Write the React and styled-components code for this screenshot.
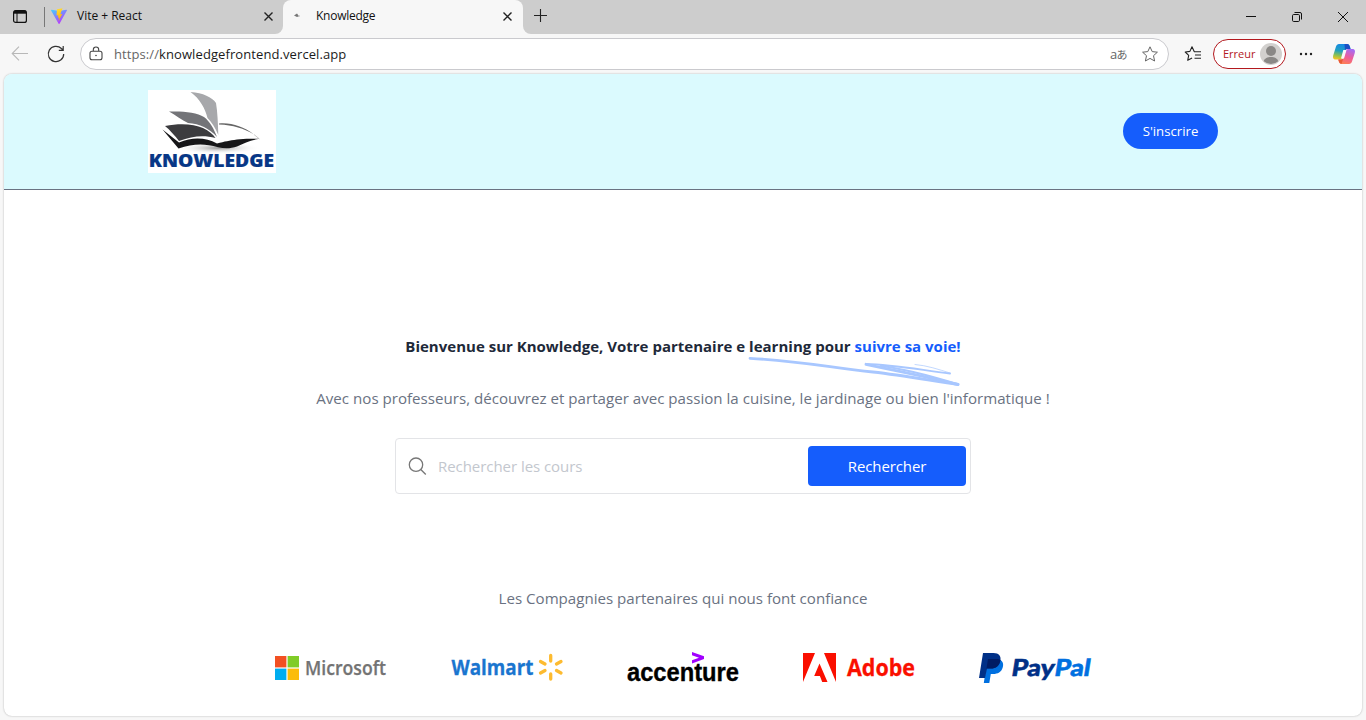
import React from "react";
import styled, { createGlobalStyle } from "styled-components";

const GlobalStyle = createGlobalStyle`
  * { box-sizing: border-box; }
  body {
    margin: 0;
    background: #f7f7f7;
    font-family: "Open Sans", "Noto Sans", sans-serif;
    overflow: hidden;
  }
  svg { display: block; flex: none; overflow: visible; }
`;

const Window = styled.div`
  width: 1366px;
  height: 720px;
  display: flex;
  flex-direction: column;
  background: #f7f7f7;
`;

const TabStrip = styled.div`
  height: 34px;
  display: flex;
  background: #f7f7f7;
`;

const LeftStrip = styled.div`
  width: 283px;
  display: flex;
  align-items: center;
  padding: 0 10px 2px 13px;
  background: #cdcdcd;
  border-bottom-right-radius: 8px;
`;

const Divider = styled.span`
  width: 1px;
  height: 20px;
  margin: 2px 6px 0 17px;
  background: #777;
`;

const ActiveTabSlot = styled.div`
  width: 240px;
  background: #cdcdcd;
`;

const ActiveTab = styled.div`
  height: 34px;
  display: flex;
  align-items: center;
  padding: 0 11px 2px 10px;
  background: #f7f7f7;
  border-radius: 8px 8px 0 0;
`;

const TabTitle = styled.span`
  flex: 1;
  margin-left: ${(p) => p.$gap}px;
  font-size: 12px;
  line-height: 16px;
  letter-spacing: ${(p) => p.$track || 0}px;
  color: #111;
`;

const RightStrip = styled.div`
  flex: 1;
  display: flex;
  align-items: center;
  padding: 0 17px 2px 10px;
  background: #cdcdcd;
  border-bottom-left-radius: 8px;
`;

const WindowButtons = styled.div`
  margin: 2px 0 0 auto;
  display: flex;
  align-items: center;
  gap: 34px;
`;

const Toolbar = styled.div`
  height: 40px;
  display: flex;
  align-items: center;
  padding: 0 10px 0 11px;
`;

const AddressBar = styled.div`
  width: 1089px;
  height: 32px;
  margin-left: 15px;
  padding: 0 10px 0 8px;
  display: flex;
  align-items: center;
  background: #fff;
  border: 1px solid #cacace;
  border-radius: 16px;
`;

const Url = styled.span`
  flex: 1;
  margin-left: 11px;
  font-size: 13px;
  letter-spacing: 0.09px;
  color: #1b1b1b;
  span { color: #666; }
`;

const Translate = styled.span`
  margin-right: 15px;
  color: #666;
  font-family: "Open Sans", "Noto Sans CJK JP", sans-serif;
  font-size: 13px;
  line-height: 16px;
  letter-spacing: -0.6px;
  small { font-size: 11px; }
`;

const Profile = styled.div`
  width: 73px;
  height: 30px;
  margin: 0 13px 0 12px;
  padding: 0 3px 1px 9px;
  display: flex;
  align-items: center;
  justify-content: space-between;
  border: 1px solid #b3181e;
  border-radius: 15px;
  background: #fff;
  color: #b3181e;
  font-size: 11px;
`;

const Page = styled.main`
  height: 642px;
  margin: 0 4px;
  display: flex;
  flex-direction: column;
  background: #fff;
  border-radius: 8px;
  overflow: hidden;
  box-shadow: 0 0 2px rgba(0, 0, 0, 0.3);
`;

const Header = styled.header`
  height: 116px;
  flex: none;
  display: flex;
  align-items: flex-start;
  justify-content: space-between;
  padding: 16px 144px;
  background: #dbfafe;
  border-bottom: 1px solid #6a7282;
`;

const SignUp = styled.button`
  width: 95px;
  height: 36px;
  margin-top: 23px;
  padding: 0;
  border: 0;
  border-radius: 18px;
  background: #155dfc;
  color: #fff;
  font: 400 13.2px "Open Sans", sans-serif;
`;

const Hero = styled.section`
  display: flex;
  flex-direction: column;
  align-items: center;
  padding-top: 144px;
`;

const Title = styled.h1`
  margin: 0;
  position: relative;
  font-size: 15px;
  line-height: 24px;
  font-weight: 700;
  letter-spacing: 0.01px;
  white-space: nowrap;
  color: #1e2939;
  em { font-style: normal; color: #155dfc; }
`;

const Underline = styled.svg`
  position: absolute;
  right: -1px;
  bottom: -29px;
`;

const Paragraph = styled.p`
  margin: ${(p) => p.$top}px 0 0;
  font-size: 15.1px;
  line-height: 24px;
  letter-spacing: ${(p) => p.$track || 0}px;
  white-space: nowrap;
  color: #6a7282;
`;

const Search = styled.form`
  width: 576px;
  height: 56px;
  margin-top: 28px;
  padding: 0 4px 0 11px;
  display: flex;
  align-items: center;
  border: 1px solid #e3e4e7;
  border-radius: 4px;
`;

const Placeholder = styled.span`
  flex: 1;
  margin-left: 11px;
  font-size: 15px;
  letter-spacing: -0.05px;
  color: #c3c7ce;
`;

const SearchButton = styled.button`
  width: 158px;
  height: 40px;
  padding: 0;
  border: 0;
  border-radius: 4px;
  background: #155dfc;
  color: #fff;
  font: 400 15px "Open Sans", sans-serif;
  letter-spacing: -0.1px;
`;

const Partners = styled.div`
  display: flex;
  align-items: center;
  gap: 64px;
  margin-top: 42px;
`;

const Close = () => (
  <svg width="10" height="10" viewBox="0 0 10 10" stroke="#222" strokeWidth="1.4">
    <path d="M1.500 1.500l8 8M9.500 1.500l-8 8" />
  </svg>
);

const STAR = "M8 .8l2.2 4.8 5.2.6-3.9 3.5 1.1 5.3L8 12.4 3.4 15l1.1-5.3L.6 6.2l5.2-.6z";

const BookLogo = () => (
  <svg width="128" height="83" viewBox="0 0 128 83">
    <defs>
      <radialGradient id="shade">
        <stop offset="0" stopColor="#777" stopOpacity=".75" />
        <stop offset="1" stopColor="#fff" stopOpacity="0" />
      </radialGradient>
    </defs>
    <rect width="128" height="83" fill="#fff" />
    <ellipse cx="70" cy="58" rx="42" ry="6" fill="url(#shade)" />
    <path d="M42.500 2C55 3 64 7 68 13c1.500 9 2 20 2.300 32-3-7-6-12-10.800-17C57 18 52 9 42.500 2z" fill="#a7a8ab" />
    <path d="M21 21.500C34 21 49 22 56 27c6 4.500 10 12 13 20-8-9-17-13-29-14C34 30 27 25 21 21.500z" fill="#737478" />
    <path d="M17 36c15-3 29-2 38 2 6 3 10 6 12.500 10-12-3-23-2-36.500 3-4-5-9-11-14-15z" fill="#3c3c3f" />
    <path d="M14.500 39.500l16.500 13c14-6 27-5 38 1 8-2 12-3 20-4 6-1 13-1 22.500-.7C103 50 96 53 89 56.500c-6 2-12 2.500-19 .7-14-4-25-3.500-39.500 1.300z" fill="#161618" />
    <path d="M71 33.500c13-1 24 3 35 11-10-6-21-9.500-35-10z" fill="#666" />
    <path d="M106 44.500l5.500 4.500" stroke="#999" strokeWidth=".5" />
    <text x="0.700" y="77.200" fontFamily="Open Sans" fontWeight="800" fontSize="18" textLength="125.300" lengthAdjust="spacingAndGlyphs" fill="#073786" stroke="#073786" strokeWidth=".2">KNOWLEDGE</text>
  </svg>
);

const Microsoft = () => (
  <svg width="112" height="32" viewBox="0 0 112 32">
    <path fill="#f25022" d="M0 4h11.4v11.4H0z" />
    <path fill="#80cc28" d="M12.6 4H24v11.4H12.6z" />
    <path fill="#00adef" d="M0 16.6h11.4V28H0z" />
    <path fill="#fbbc09" d="M12.6 16.6H24V28H12.6z" />
    <text x="30" y="23" fontFamily="Open Sans" fontWeight="600" fontSize="19.5" textLength="81" lengthAdjust="spacingAndGlyphs" fill="#737373" stroke="#737373" strokeWidth=".25">Microsoft</text>
  </svg>
);

const Walmart = () => (
  <svg width="112" height="32" viewBox="0 0 112 32">
    <text x="0.500" y="23" fontFamily="Open Sans" fontWeight="700" fontSize="22" textLength="82" lengthAdjust="spacingAndGlyphs" fill="#1a75cf" stroke="#1a75cf" strokeWidth=".3">Walmart</text>
    <g stroke="#fdbb30" strokeWidth="3.3" strokeLinecap="round">
      <path d="M99.700 3.500V9M99.700 22v5M89.500 9.500l4.500 2.500M110 9.500l-4.500 2.500M89.500 21l4.500-2.500M110 21l-4.500-2.500" />
    </g>
  </svg>
);

const Accenture = () => (
  <svg width="112" height="32" viewBox="0 0 112 32">
    <path d="M65 0l12 4.300v2.800L65 11.500V8.200l7-2.500-7-2.400z" fill="#a100ff" />
    <text x="0" y="29" fontFamily="Liberation Sans" fontWeight="700" fontSize="25.500" textLength="112" lengthAdjust="spacingAndGlyphs" fill="#000" stroke="#000" strokeWidth=".35">accenture</text>
  </svg>
);

const Adobe = () => (
  <svg width="112" height="32" viewBox="0 0 112 32">
    <path d="M0 1h12L0 30zM21 1h12v29zM16.500 11.500L24.500 30h-5.300l-2.300-6h-5.700z" fill="#fa0f00" />
    <text x="44" y="23.500" fontFamily="Open Sans" fontWeight="700" fontSize="23" textLength="68" lengthAdjust="spacingAndGlyphs" fill="#fa0f00" stroke="#fa0f00" strokeWidth=".3">Adobe</text>
  </svg>
);

const PayPal = () => (
  <svg width="112" height="32" viewBox="0 0 112 32">
    <path d="M8.500 7H19c4.700 1 6 5 4.700 8.500-1.200 4.500-5 6.500-9.500 6.500h-2.400L10.300 31H4.800z" fill="#0070e0" />
    <path d="M4 1h10.500C20 1 22.500 4.500 21.300 9c-1.200 5.500-5 7.500-9.500 7.500H8L6 26H0z" fill="#003087" />
    <path d="M9 7h9.500c1.200 0 2.200.300 2.900 1-.8 6-4.400 8.500-9.600 8.500H7.500z" fill="#001c64" />
    <g transform="translate(31.500 24) skewX(-9)" fontFamily="Lato" fontWeight="900" fontSize="23.500" strokeWidth=".5">
      <text x="0" y="0" textLength="43" lengthAdjust="spacingAndGlyphs" fill="#003087" stroke="#003087">Pay</text>
      <text x="43" y="0" textLength="36" lengthAdjust="spacingAndGlyphs" fill="#0070e0" stroke="#0070e0">Pal</text>
    </g>
  </svg>
);

const Browser = () => (
  <>
    <TabStrip>
      <LeftStrip>
        <svg width="14" height="13" viewBox="0 0 14 13" fill="none" stroke="#111">
          <rect x=".6" y=".6" width="12.8" height="11.8" rx="2" strokeWidth="1.2" />
          <path d="M1 2.2h12" strokeWidth="3" />
          <path d="M4 3v9" />
        </svg>
        <Divider />
        <svg width="16" height="16" viewBox="0 0 32 32">
          <defs>
            <linearGradient id="vite" x1="0" y1="0" x2=".6" y2="1"><stop stopColor="#41d1ff" /><stop offset="1" stopColor="#bd34fe" /></linearGradient>
            <linearGradient id="bolt" x1=".4" y1="0" x2=".6" y2="1"><stop stopColor="#ffdd35" /><stop offset="1" stopColor="#ffa800" /></linearGradient>
          </defs>
          <path d="M31.8 5L17 31.3a1 1 0 01-1.8 0L.2 5a1 1 0 011-1.5L16 6l14.7-2.5A1 1 0 0131.8 5z" fill="url(#vite)" />
          <path d="M23 .5L12 2.6l-1 12.3 3.7-.6-1 5.2 2.8-.5-2 8 8-15-4 .7L23 .5z" fill="url(#bolt)" />
        </svg>
        <TabTitle $gap={10} $track={-0.02}>Vite + React</TabTitle>
        <Close />
      </LeftStrip>
      <ActiveTabSlot>
        <ActiveTab>
          <svg width="8" height="6" viewBox="0 0 8 6"><path d="M1 2.500l3-2 2 2.700-2 .8z" fill="#777" /><path d="M5 3h2" stroke="#bbb" /></svg>
          <TabTitle $gap={15} $track={-0.25}>Knowledge</TabTitle>
          <Close />
        </ActiveTab>
      </ActiveTabSlot>
      <RightStrip>
        <svg width="14" height="14" viewBox="0 0 14 14" stroke="#222" strokeWidth="1.1"><path d="M7.500 0v13M1 6.500h13" /></svg>
        <WindowButtons>
          <svg width="12" height="12" viewBox="0 0 12 12" stroke="#111"><path d="M1 5.500h10" /></svg>
          <svg width="12" height="12" viewBox="0 0 12 12" fill="none" stroke="#111"><rect x="1.500" y="3.500" width="7" height="7" rx="1.200" /><path d="M3.500 1.500H9a1.500 1.500 0 011.500 1.500v5.500" /></svg>
          <svg width="12" height="12" viewBox="0 0 12 12" stroke="#111"><path d="M1 1l10 10M11 1L1 11" /></svg>
        </WindowButtons>
      </RightStrip>
    </TabStrip>
    <Toolbar>
      <svg width="18" height="16" viewBox="0 0 18 16" fill="none" stroke="#b8b8b8" strokeWidth="1.1"><path d="M17 7.500H1.500M8 .7L1.200 7.500 8 14.300" /></svg>
      <svg width="18" height="18" viewBox="0 0 18 18" fill="none" stroke="#333" strokeWidth="1.2" style={{ marginLeft: 18 }}><path d="M16.700 9A7.700 7.700 0 1114.400 3.500L16 5M16.200 1v4.400h-4.400" /></svg>
      <AddressBar>
        <svg width="14" height="14" viewBox="0 0 14 14" fill="none" stroke="#444" strokeWidth="1.1"><rect x="1" y="4.200" width="12" height="8.600" rx="2" /><path d="M4.300 4V2.700a2.700 2.700 0 015.400 0V4" /><circle cx="7" cy="8.500" r=".8" fill="#444" stroke="none" /></svg>
        <Url><span>https://</span>knowledgefrontend.vercel.app</Url>
        <Translate>a<small>あ</small></Translate>
        <svg width="16" height="16" viewBox="0 0 16 16" fill="none" stroke="#666" strokeLinejoin="round"><path d={STAR} /></svg>
      </AddressBar>
      <svg width="17" height="16" viewBox="0 0 17 16" fill="none" stroke="#222" strokeWidth="1.1" strokeLinejoin="round" style={{ marginLeft: 15 }}>
        <path d="M10.300 5.700L8 .7 5.900 5.400 1.200 6l3.500 3.300-1 5 4.400-2.400M10 5.700h7M11 9h6M10.500 12.300H17" />
      </svg>
      <Profile>
        Erreur
        <svg width="22" height="22" viewBox="0 0 22 22"><circle cx="11" cy="11" r="11" fill="#d2d0ce" /><circle cx="11" cy="8" r="5" fill="#8a8886" /><path d="M3.800 18.300c1-5.600 13.400-5.600 14.400 0a11 11 0 01-14.400 0z" fill="#8a8886" /></svg>
      </Profile>
      <svg width="14" height="4" viewBox="0 0 14 4" fill="#222"><circle cx="2" cy="2" r="1.200" /><circle cx="7" cy="2" r="1.200" /><circle cx="12" cy="2" r="1.200" /></svg>
      <svg width="22" height="20" viewBox="0 0 22 20" style={{ marginLeft: 20 }}>
        <defs>
          <linearGradient id="coolSide" x1=".5" y1="0" x2=".3" y2="1"><stop stopColor="#1689e5" /><stop offset=".45" stopColor="#20a0c0" /><stop offset=".75" stopColor="#8bc052" /><stop offset="1" stopColor="#f5c421" /></linearGradient>
          <linearGradient id="warmSide" x1=".7" y1="0" x2=".3" y2="1"><stop stopColor="#a56bf5" /><stop offset=".5" stopColor="#ed5c9c" /><stop offset="1" stopColor="#ff8050" /></linearGradient>
        </defs>
        <path d="M6 0h8c2 0 2.600 1.500 3 3l.5 2h-3c-2 0-2.500 1-3 2.500L10 13c-.6 2-1.400 2.500-3 2.500H3c-3 0-3.500-2-2.500-5L3 2.500C3.500 1 4.500 0 6 0z" fill="url(#coolSide)" />
        <path d="M16 20H9c-2 0-2.800-1-3.300-3l-.4-1.500H8c1.800 0 2.500-1 3-2.500L12.500 7.500C13 5.800 13.700 5 15.500 5H19c3 0 3.500 2 2.600 4.500L19 17.500c-.5 1.500-1.500 2.500-3 2.500z" fill="url(#warmSide)" />
        <path d="M11.500 0H14c2 0 2.600 1.500 3 3l.5 2h-3c-1.500 0-2 .5-2.500 1.500z" fill="#1b4fc4" />
        <path d="M5.300 15.500H8c1 0 1.700-.3 2.200-1L8.500 20C6.500 19.500 6 18 5.700 17z" fill="#e85a35" />
        <path d="M10.300 6H13.500L11 14.500H8z" fill="#fbf7fa" />
      </svg>
    </Toolbar>
  </>
);

export default function App() {
  return (
    <Window>
      <GlobalStyle />
      <Browser />
      <Page>
        <Header>
          <BookLogo />
          <SignUp>S'inscrire</SignUp>
        </Header>
        <Hero>
          <Title>
            Bienvenue sur Knowledge, Votre partenaire e learning pour <em>suivre sa voie!</em>
            <Underline width="213" height="30" viewBox="0 0 213 30" fill="none" stroke="#a8c7ff" strokeLinecap="round">
              <path d="M1 1.300C48 3.800 76 9.500 124 15c31 3.500 57 8.500 85 12.500" strokeWidth="2.800" />
              <path d="M117 7.300c25 5.500 60 12 92 20.200" strokeWidth="2.900" />
              <path d="M117 7c26 .5 52 5.500 84 9.500" strokeWidth="2" />
              <path d="M132 9c25 3 50 10 76 18" strokeWidth="2.200" />
              <path d="M166 7.500c12 1 24 5 35 8.500" strokeWidth=".7" />
            </Underline>
          </Title>
          <Paragraph $top={28} $track={0.01}>Avec nos professeurs, découvrez et partager avec passion la cuisine, le jardinage ou bien l'informatique !</Paragraph>
          <Search>
            <svg width="20" height="20" viewBox="0 0 20 20" fill="none" stroke="#777" strokeWidth="1.300"><circle cx="9" cy="8.700" r="6.700" /><path d="M13.800 13.500l5 5" /></svg>
            <Placeholder>Rechercher les cours</Placeholder>
            <SearchButton type="button">Rechercher</SearchButton>
          </Search>
          <Paragraph $top={92}>Les Compagnies partenaires qui nous font confiance</Paragraph>
          <Partners>
            <Microsoft />
            <Walmart />
            <Accenture />
            <Adobe />
            <PayPal />
          </Partners>
        </Hero>
      </Page>
    </Window>
  );
}
